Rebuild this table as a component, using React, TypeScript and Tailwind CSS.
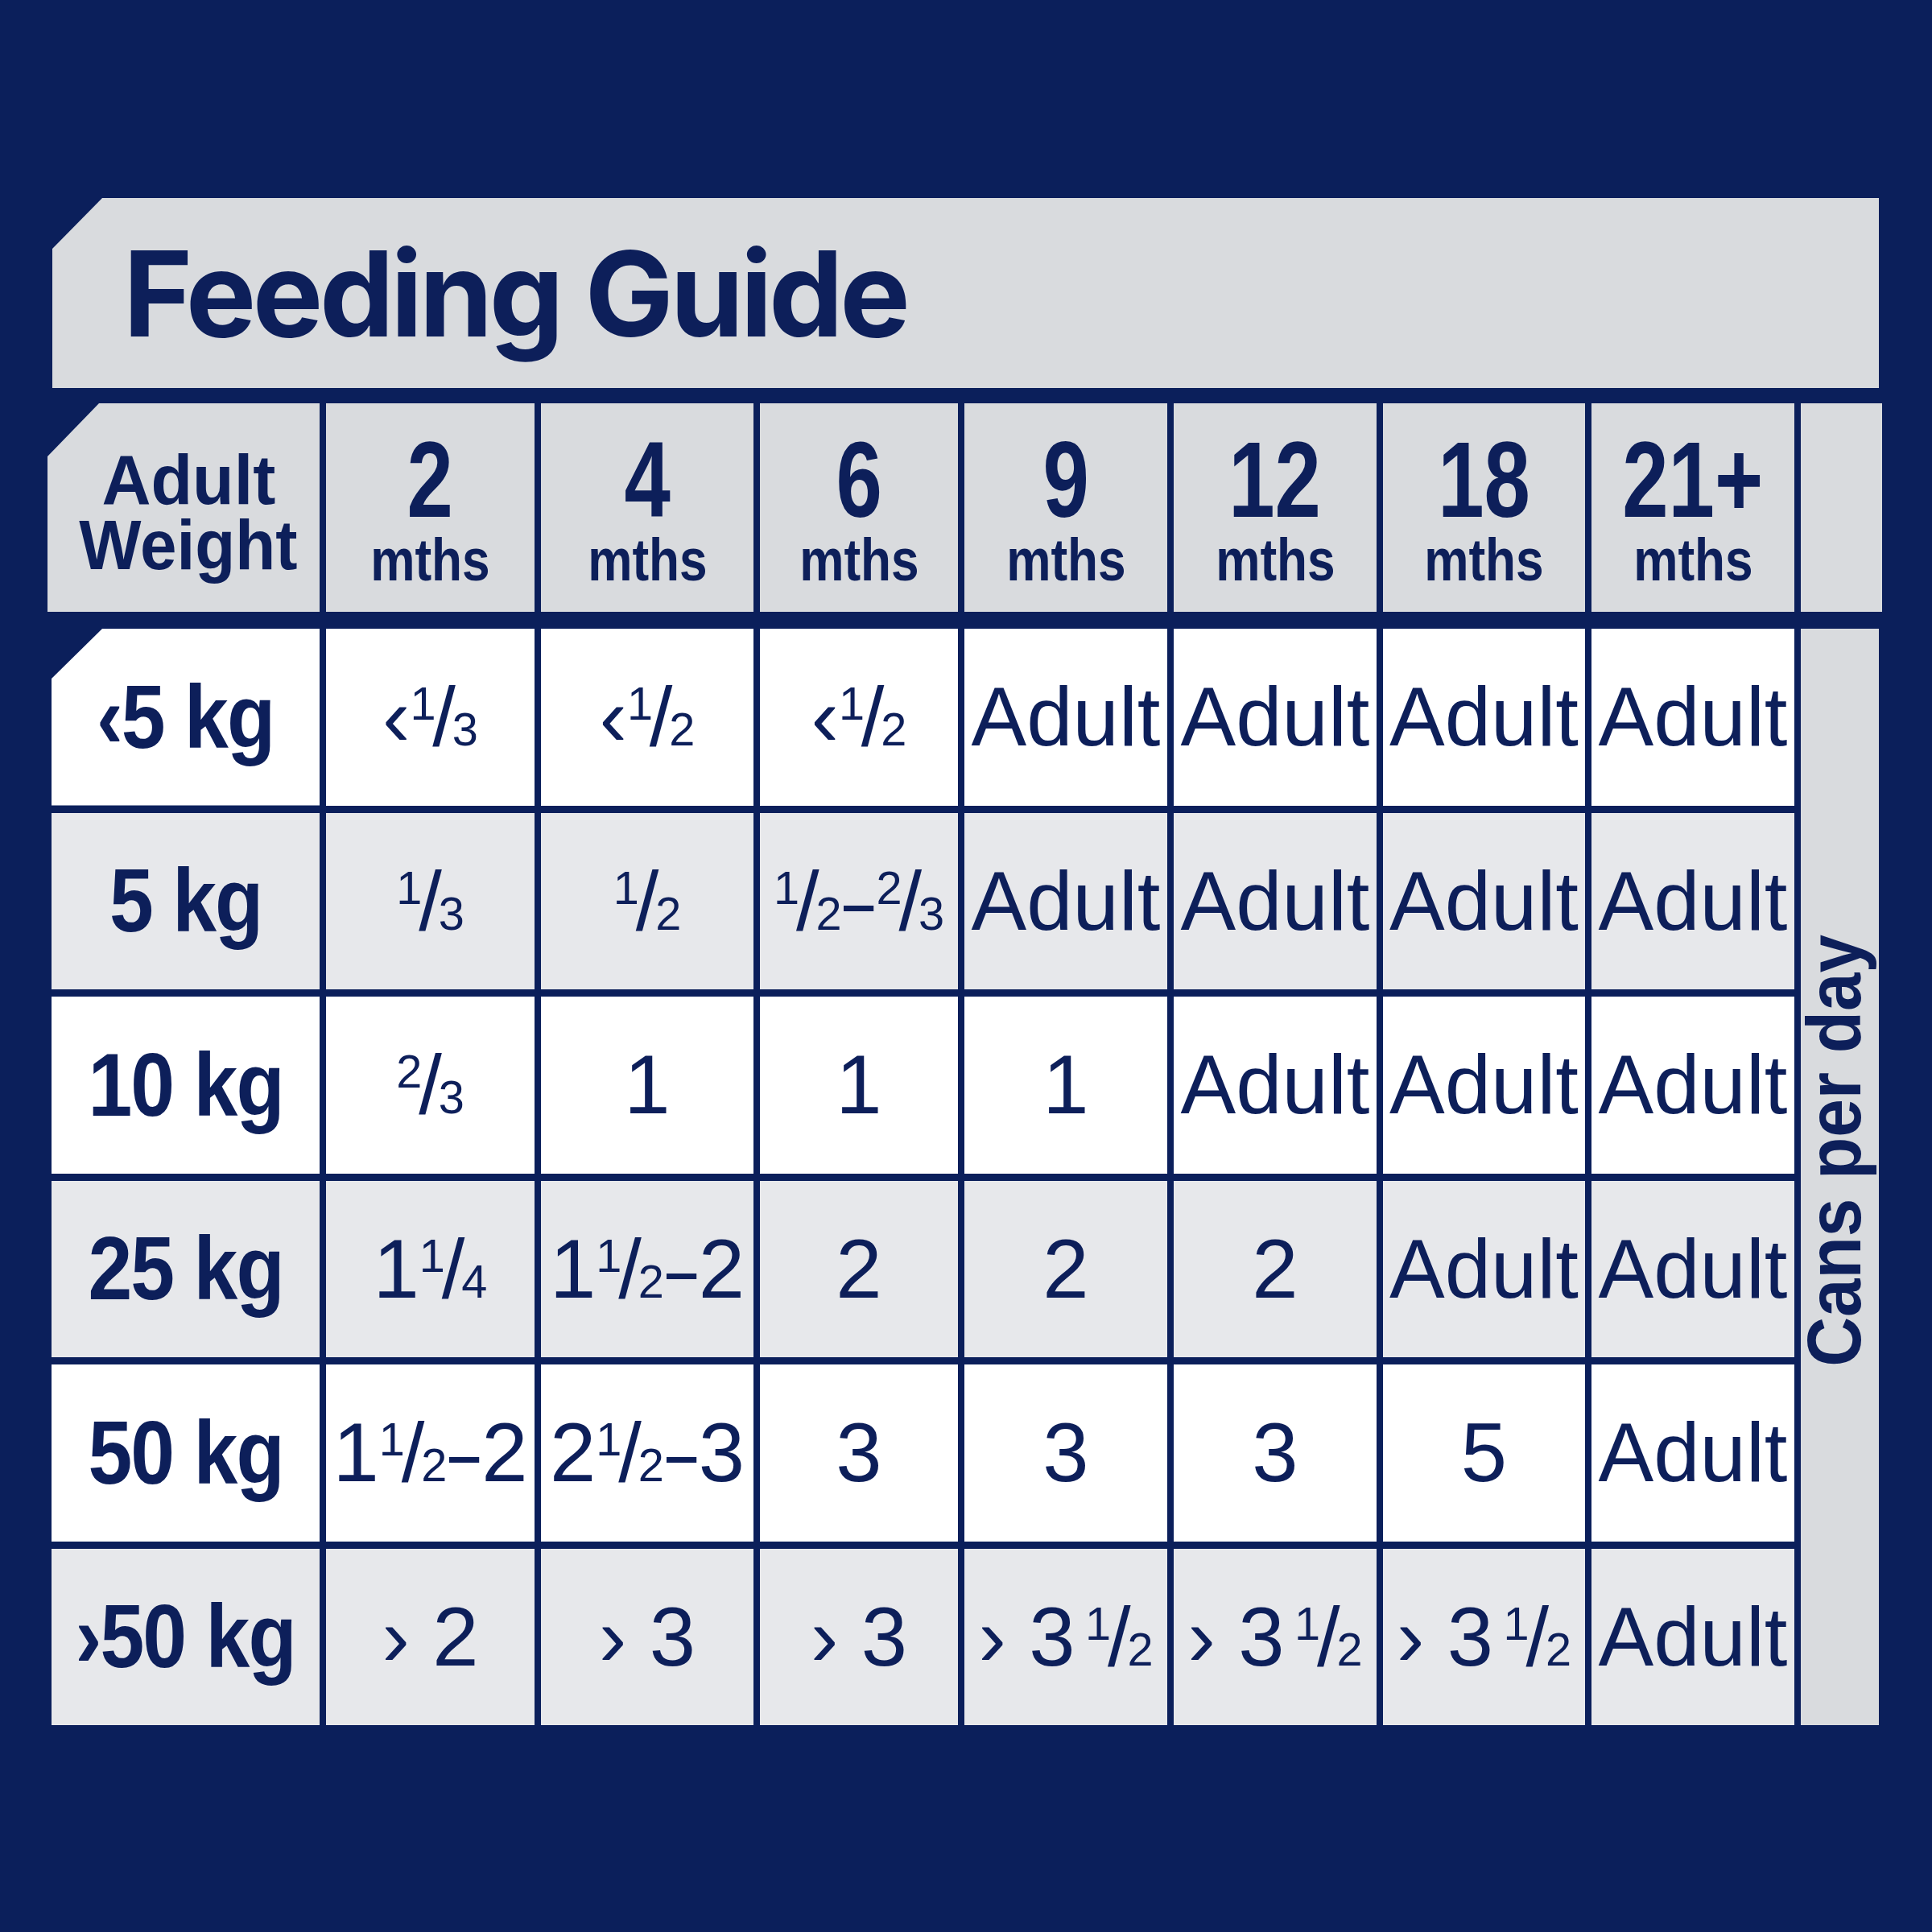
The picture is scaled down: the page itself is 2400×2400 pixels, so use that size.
import React from "react";

type Piece = string | { n: string; d: string };

const parse = (s: string): Piece[] => {
  const out: Piece[] = [];
  const re = /\{(\d)\/(\d)\}|–/g;
  let last = 0;
  let m: RegExpExecArray | null;
  while ((m = re.exec(s))) {
    if (m.index > last) out.push(s.slice(last, m.index));
    out.push(m[0] === "–" ? "–" : { n: m[1], d: m[2] });
    last = m.index + m[0].length;
  }
  if (last < s.length) out.push(s.slice(last));
  return out;
};

const Frac = ({ n, d, spaced }: { n: string; d: string; spaced?: boolean }) => (
  <span className={spaced ? "whitespace-nowrap ml-[0.12em]" : "whitespace-nowrap"}>
    <span className="text-[0.56em] align-[0.56em]">{n}</span>
    <span className="mx-[-0.04em]">/</span>
    <span className="text-[0.56em]">{d}</span>
  </span>
);

const Value = ({ text }: { text: string }) => {
  const pieces = parse(text);
  return (
    <>
      {pieces.map((p, i) => {
        if (typeof p !== "string") {
          const prev = pieces[i - 1];
          const spaced = typeof prev === "string" && prev.endsWith(" ") && prev.length > 2;
          return <Frac key={i} n={p.n} d={p.d} spaced={spaced} />;
        }
        if (p === "–") {
          return (
            <span key={i} className="inline-block scale-x-[0.65] mx-[-0.07em]">
              –
            </span>
          );
        }
        return <span key={i}>{p}</span>;
      })}
    </>
  );
};

const ages = ["2", "4", "6", "9", "12", "18", "21+"];

const rows: { weight: string; values: string[] }[] = [
  { weight: "‹5 kg", values: ["‹{1/3}", "‹{1/2}", "‹{1/2}", "Adult", "Adult", "Adult", "Adult"] },
  { weight: "5 kg", values: ["{1/3}", "{1/2}", "{1/2}–{2/3}", "Adult", "Adult", "Adult", "Adult"] },
  { weight: "10 kg", values: ["{2/3}", "1", "1", "1", "Adult", "Adult", "Adult"] },
  { weight: "25 kg", values: ["1{1/4}", "1{1/2}–2", "2", "2", "2", "Adult", "Adult"] },
  { weight: "50 kg", values: ["1{1/2}–2", "2 {1/2}–3", "3", "3", "3", "5", "Adult"] },
  { weight: "›50 kg", values: ["› 2", "› 3", "› 3", "› 3 {1/2}", "› 3 {1/2}", "› 3 {1/2}", "Adult"] },
];

export default function App() {
  return (
    <div className="w-[2400px] h-[2400px] bg-[#0b1f5b] pt-[246px] pl-[64px] text-[#0d1f5a] font-['Liberation_Sans',Arial,sans-serif]">
      {/* title banner */}
      <div className="ml-[1px] w-[2269px] h-[236px] bg-[#d9dbde] [clip-path:polygon(62px_0,100%_0,100%_100%,0_100%,0_63px)] flex items-center pl-[88px]">
        <span className="font-['Inter',sans-serif] font-bold text-[147px] leading-none tracking-[-0.03em]">
          Feeding Guide
        </span>
      </div>

      {/* header row */}
      <div className="ml-[-5px] mt-[19px] grid grid-cols-[338px_259px_264px_246px_252px_252px_251px_252px_101px] gap-x-[8px] h-[259px]">
        <div className="bg-[#d9dbde] [clip-path:polygon(64px_0,100%_0,100%_100%,0_100%,0_66px)] flex flex-col items-center justify-center pl-[12px] pt-[10px] font-bold">
          <span className="inline-block scale-x-[0.96] text-[88px] leading-[81px]">Adult</span>
          <span className="inline-block scale-x-[0.93] text-[88px] leading-[81px]">Weight</span>
        </div>
        {ages.map((a) => (
          <div key={a} className="bg-[#d9dbde] flex flex-col items-center justify-center font-bold">
            <span className="inline-block scale-x-[0.77] text-[134px] leading-none whitespace-nowrap">{a}</span>
            <span className="inline-block scale-x-[0.84] text-[74px] leading-none mt-[-4px]">mths</span>
          </div>
        ))}
        <div className="bg-[#d9dbde]" />
      </div>

      {/* data rows */}
      <div className="mt-[21px] grid grid-cols-[333px_259px_264px_246px_252px_252px_251px_252px_97px] grid-rows-[repeat(6,minmax(0,1fr))] gap-x-[8px] gap-y-[9px] h-[1362px]">
        <div className="col-start-9 row-start-1 row-span-6 bg-[#d9dbde] flex items-center justify-center pb-[66px] pr-[14px]">
          <span className="[writing-mode:vertical-rl] rotate-180 scale-y-[0.9] text-[95px] font-bold leading-none whitespace-nowrap">
            Cans per day
          </span>
        </div>
        {rows.map((r, ri) => {
          const bg = ri % 2 === 0 ? "bg-white" : "bg-[#e7e8eb]";
          return (
            <React.Fragment key={r.weight}>
              <div
                className={`${bg} ${
                  ri === 0 ? "[clip-path:polygon(63px_0,100%_0,100%_100%,0_100%,0_62px)]" : ""
                } col-start-1 flex items-center justify-center`}
              >
                <span className="inline-block scale-x-[0.88] text-[112px] font-bold leading-none tracking-[-0.02em] whitespace-nowrap">
                  {r.weight}
                </span>
              </div>
              {r.values.map((v, vi) => (
                <div
                  key={vi}
                  className={`${bg} flex items-center justify-center text-[103px] leading-none whitespace-nowrap`}
                >
                  <Value text={v} />
                </div>
              ))}
            </React.Fragment>
          );
        })}
      </div>
    </div>
  );
}
